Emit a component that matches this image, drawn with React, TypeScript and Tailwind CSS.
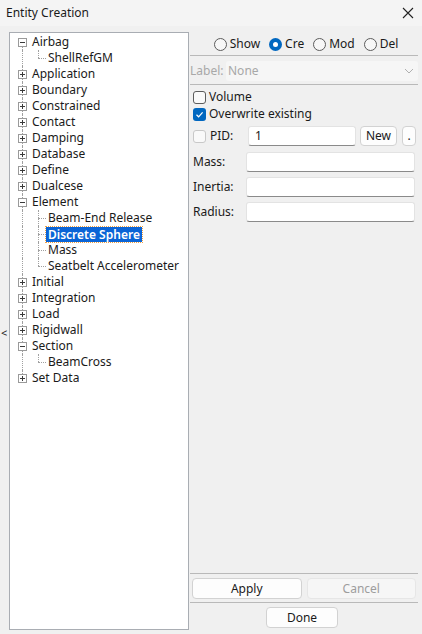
import React from 'react';

type Node = { label: string; open?: boolean; kids?: string[] };

const TREE: Node[] = [
  { label: 'Airbag', open: true, kids: ['ShellRefGM'] },
  { label: 'Application' },
  { label: 'Boundary' },
  { label: 'Constrained' },
  { label: 'Contact' },
  { label: 'Damping' },
  { label: 'Database' },
  { label: 'Define' },
  { label: 'Dualcese' },
  { label: 'Element', open: true, kids: ['Beam-End Release', 'Discrete Sphere', 'Mass', 'Seatbelt Accelerometer'] },
  { label: 'Initial' },
  { label: 'Integration' },
  { label: 'Load' },
  { label: 'Rigidwall' },
  { label: 'Section', open: true, kids: ['BeamCross'] },
  { label: 'Set Data' },
];

const SELECTED = 'Discrete Sphere';

// 9x9 expander box with +/- drawn in
const Expander = ({ open }: { open?: boolean }) => (
  <svg width="9" height="9" viewBox="0 0 9 9" className="absolute left-[4px] top-[4px]">
    <rect x="0.5" y="0.5" width="8" height="8" fill="#fff" stroke="#9a9a9a" />
    <line x1="2" y1="4.5" x2="7" y2="4.5" stroke="#3a3a3a" />
    {!open && <line x1="4.5" y1="2" x2="4.5" y2="7" stroke="#3a3a3a" />}
  </svg>
);

const TreeRow = ({ node, first, last }: { node: Node; first: boolean; last: boolean }) => (
  <>
    <div className="flex h-4 items-center">
      <div className="relative h-4 w-4 shrink-0">
        <div
          className={`absolute left-[8px] border-l border-dotted border-[#a0a0a0] ${first ? 'top-2' : 'top-0'} ${
            last ? 'h-2' : 'bottom-0'
          }`}
        />
        <Expander open={node.open} />
      </div>
      <span className="ml-[2px] whitespace-nowrap">{node.label}</span>
    </div>
    {node.open &&
      node.kids?.map((k, i) => {
        const lastKid = i === (node.kids?.length ?? 0) - 1;
        const sel = k === SELECTED;
        return (
          <div key={k} className="flex h-4 items-center">
            <div className="relative h-4 w-4 shrink-0">
              {!last && <div className="absolute left-[8px] top-0 bottom-0 border-l border-dotted border-[#a0a0a0]" />}
            </div>
            <div className="relative h-4 w-4 shrink-0">
              <div className={`absolute left-[8px] top-0 border-l border-dotted border-[#a0a0a0] ${lastKid ? 'h-2' : 'bottom-0'}`} />
              <div className="absolute left-[8px] top-2 w-[8px] border-t border-dotted border-[#a0a0a0]" />
            </div>
            {sel ? (
              <span className="ml-0 whitespace-nowrap bg-[#0a64d6] px-[2px] leading-[15px] font-semibold text-white outline-1 outline-dotted outline-[#f0a040]">
                {k}
              </span>
            ) : (
              <span className="ml-[2px] whitespace-nowrap">{k}</span>
            )}
          </div>
        );
      })}
  </>
);

const Radio = ({ label, on }: { label: string; on?: boolean }) => (
  <label className="flex items-center gap-[3px]">
    {on ? (
      <span className="flex h-[13px] w-[13px] items-center justify-center rounded-full bg-[#0067c0]">
        <span className="h-[5px] w-[5px] rounded-full bg-white" />
      </span>
    ) : (
      <span className="h-[13px] w-[13px] rounded-full border border-[#5c5c5c] bg-[#f7f7f7]" />
    )}
    <span>{label}</span>
  </label>
);

const Check = ({ on, faint }: { on?: boolean; faint?: boolean }) =>
  on ? (
    <span className="flex h-[13px] w-[13px] shrink-0 items-center justify-center rounded-[3px] bg-[#0067c0]">
      <svg width="9" height="9" viewBox="0 0 9 9">
        <path d="M1.5 4.8 L3.6 6.8 L7.6 2.3" fill="none" stroke="#fff" strokeWidth="1.2" />
      </svg>
    </span>
  ) : (
    <span
      className={`h-[13px] w-[13px] shrink-0 rounded-[3px] border bg-[#f9f9f9] ${faint ? 'border-[#c8c8c8]' : 'border-[#5c5c5c]'}`}
    />
  );

const Field = ({ value = '', className = '' }: { value?: string; className?: string }) => (
  <div
    className={`flex h-5 items-center rounded-[3px] border border-[#e3e3e3] border-b-[#8a8a8a] bg-white px-[6px] ${className}`}
  >
    {value}
  </div>
);

const Btn = ({ children, className = '', disabled }: { children: React.ReactNode; className?: string; disabled?: boolean }) => (
  <div
    className={`flex h-5 items-center justify-center rounded-[4px] border ${
      disabled ? 'border-[#e6e6e6] bg-[#f6f6f6] text-[#9d9d9d]' : 'border-[#d2d2d2] bg-[#fdfdfd] text-[#1a1a1a]'
    } ${className}`}
  >
    {children}
  </div>
);

const Sep = ({ className = '' }: { className?: string }) => (
  <div className={`h-[2px] border-t border-[#b9b9b9] border-b-white ${className}`} />
);

export default function App() {
  return (
    <div
      className="flex h-[634px] w-[422px] flex-col overflow-hidden bg-[#f0f0f0] text-[12px] text-[#1a1a1a]"
      style={{ fontFamily: '"Noto Sans", "Open Sans", Arial, sans-serif' }}
    >
      {/* title bar */}
      <div className="flex h-[26px] shrink-0 items-center justify-between bg-[#f4f4f4] pl-[6px] pr-[8px]">
        <span className="text-[12px]">Entity Creation</span>
        <svg width="12" height="12" viewBox="0 0 12 12">
          <path d="M1 1 L11 11 M11 1 L1 11" stroke="#222" strokeWidth="1.1" />
        </svg>
      </div>

      <div className="flex flex-1">
        {/* collapse handle */}
        <div className="flex w-[9px] shrink-0 items-center justify-start pl-[1px] pt-[4px] text-[11px] leading-none">&lt;</div>

        {/* tree */}
        <div className="mb-[4px] mt-[6px] w-[180px] shrink-0 border border-[#a9adb3] bg-white pl-[4px] pt-[1px]">
          {TREE.map((n, i) => (
            <TreeRow key={n.label} node={n} first={i === 0} last={i === TREE.length - 1} />
          ))}
        </div>

        {/* right panel */}
        <div className="ml-[1px] flex w-[228px] flex-col">
          <div className="mt-[8px] flex h-5 items-center justify-center gap-[9px] pl-[4px]">
            <Radio label="Show" />
            <Radio label="Cre" on />
            <Radio label="Mod" />
            <Radio label="Del" />
          </div>
          <Sep className="mt-[1px]" />
          <div className="mt-[4px] flex h-5 items-center">
            <span className="w-[36px] shrink-0 text-[#a8a8a8]">Label:</span>
            <div className="flex h-5 flex-1 items-center justify-between rounded-[3px] bg-[#f6f6f6] pl-[2px] pr-[4px] text-[#a8a8a8]">
              <span>None</span>
              <svg width="10" height="6" viewBox="0 0 10 6">
                <path d="M1 1 L5 5 L9 1" fill="none" stroke="#b0b0b0" strokeWidth="1" />
              </svg>
            </div>
          </div>
          <Sep className="mt-[3px]" />

          <div className="mt-[3px] flex h-4 items-center gap-[3px] pl-[3px]">
            <Check />
            <span>Volume</span>
          </div>
          <div className="mt-[1px] flex h-4 items-center gap-[3px] pl-[3px]">
            <Check on />
            <span>Overwrite existing</span>
          </div>

          <div className="mt-[4px] flex h-5 items-center pl-[3px]">
            <Check faint />
            <span className="ml-[4px] w-[38px] shrink-0">PID:</span>
            <Field value="1" className="w-[108px]" />
            <Btn className="ml-[4px] w-[37px]">New</Btn>
            <Btn className="ml-[5px] w-[14px]">.</Btn>
          </div>
          <div className="mt-[6px] flex h-5 items-center pl-[3px]">
            <span className="w-[53px] shrink-0">Mass:</span>
            <Field className="w-[169px]" />
          </div>
          <div className="mt-[5px] flex h-5 items-center pl-[3px]">
            <span className="w-[53px] shrink-0">Inertia:</span>
            <Field className="w-[169px]" />
          </div>
          <div className="mt-[5px] flex h-5 items-center pl-[3px]">
            <span className="w-[53px] shrink-0">Radius:</span>
            <Field className="w-[169px]" />
          </div>

          <div className="flex-1" />
          <Sep />
          <div className="mt-[3px] flex gap-[5px] pl-[2px] pr-[2px]">
            <Btn className="h-[21px] w-[110px]">Apply</Btn>
            <Btn className="h-[21px] w-[110px]" disabled>
              Cancel
            </Btn>
          </div>
          <Sep className="mt-[3px]" />
          <div className="relative mb-[6px] mt-[3px] flex justify-center pr-[4px]">
            <Btn className="h-[21px] w-[72px]">Done</Btn>
          </div>
        </div>
      </div>
    </div>
  );
}
